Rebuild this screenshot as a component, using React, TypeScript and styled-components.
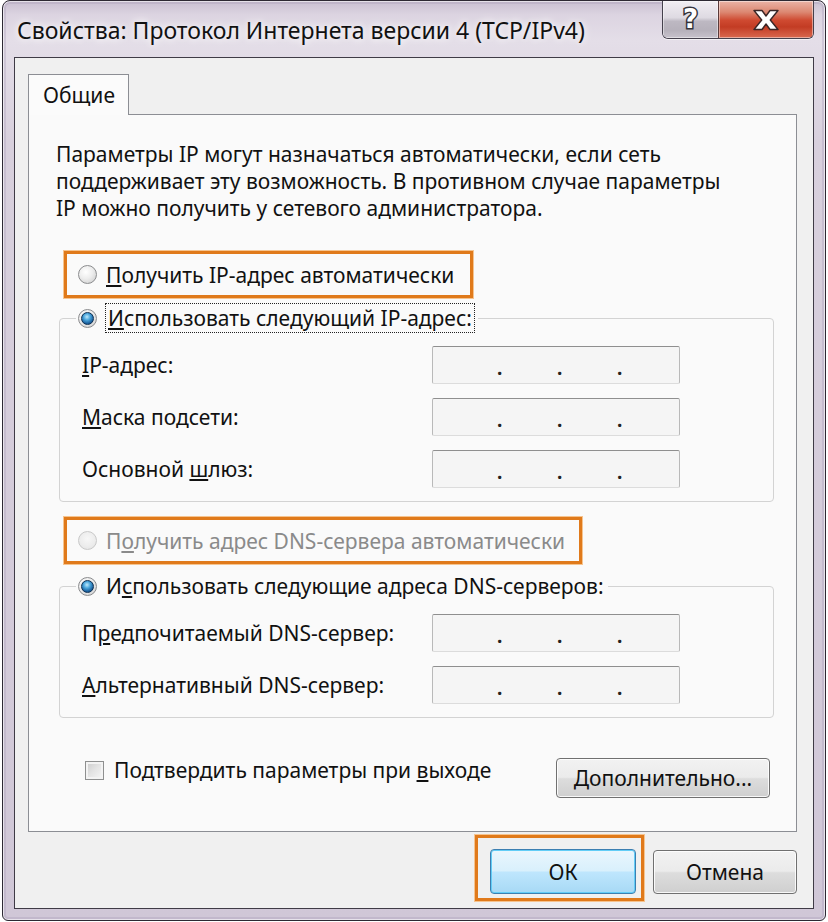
import React from 'react';
import styled, { createGlobalStyle } from 'styled-components';

const GlobalStyle = createGlobalStyle`
  html, body { margin: 0; padding: 0; background: #ffffff; }
  body { font-family: "Noto Sans", "Open Sans", sans-serif; color: #111111; }
  * { box-sizing: border-box; }
`;

const FS = 21;

const Window = styled.div`
  width: 824px;
  height: 921px;
  margin: 0 2px 1px 2px;
  border: 1px solid #2d2933;
  border-radius: 8px 8px 6px 6px;
  background: linear-gradient(180deg, #c9bfd1 0px, #dcd4e1 14px, #e4dee8 40px, #d8d0dd 140px, #d0c7d7 100%);
  box-shadow: inset 0 0 0 1px rgba(255, 255, 255, 0.6), inset 0 0 0 3px rgba(170, 158, 184, 0.35);
  display: flex;
  flex-direction: column;
  padding: 0 11px 11px 11px;
  overflow: hidden;
`;

const TitleBar = styled.div`
  height: 56px;
  display: flex;
  align-items: flex-start;
  justify-content: space-between;
`;

const Title = styled.div`
  margin-top: 15px;
  padding-left: 3px;
  font-size: 23px;
  line-height: 28px;
  color: #111;
  white-space: nowrap;
  text-shadow: 0 0 6px rgba(255, 255, 255, 0.95), 0 0 12px rgba(255, 255, 255, 0.8);
`;

const CaptionGroup = styled.div`
  display: flex;
  border: 1px solid #45414d;
  border-top: none;
  border-radius: 0 0 6px 6px;
  overflow: hidden;
  box-shadow: 0 1px 0 rgba(255, 255, 255, 0.6);
`;

const CaptionButton = styled.div<{ $close?: boolean }>`
  height: 37px;
  width: ${(p) => (p.$close ? '95px' : '55px')};
  display: flex;
  align-items: center;
  justify-content: center;
  border-left: ${(p) => (p.$close ? '1px solid #5a3a3a' : 'none')};
  background: ${(p) =>
    p.$close
      ? 'linear-gradient(180deg, #eab3a6 0%, #dc8872 30%, #cf4a31 52%, #c33c24 70%, #d9694f 100%)'
      : 'linear-gradient(180deg, #f1eef3 0%, #dedae2 45%, #bdb8c2 55%, #b6b1bb 80%, #c7c2cc 100%)'};
  box-shadow: inset 0 0 0 1px rgba(255, 255, 255, 0.45);
`;

const HelpGlyph = styled.span`
  font-family: "DejaVu Sans", sans-serif;
  font-weight: bold;
  font-size: 26px;
  line-height: 1;
  color: #ffffff;
  -webkit-text-stroke: 3px #34333b;
  paint-order: stroke fill;
  margin-top: -2px;
`;

const Client = styled.div`
  flex: 1;
  display: flex;
  flex-direction: column;
  background: #f0f0f0;
  border: 1px solid #3f3b46;
  padding: 16px 16px 14px 13px;
`;

const TabStrip = styled.div`
  display: flex;
  position: relative;
  z-index: 1;
`;

const Tab = styled.div`
  width: 101px;
  height: 41px;
  margin-bottom: -1px;
  border: 1px solid #8c8e94;
  border-bottom: none;
  background: #fbfbfb;
  font-size: ${FS}px;
  line-height: 40px;
  padding-left: 14px;
`;

const Panel = styled.div`
  flex: 1;
  display: flex;
  flex-direction: column;
  border: 1px solid #8c8e94;
  background: #fafafa;
  padding: 26px 0 0 0;
`;

const Intro = styled.p`
  margin: 0 0 0 27px;
  font-size: ${FS}px;
  line-height: 27px;
`;

const Highlight = styled.div<{ $width: number; $top: number }>`
  width: ${(p) => p.$width}px;
  height: 47px;
  margin: ${(p) => p.$top}px 0 0 35px;
  border: 3px solid #e07a1b;
  box-shadow: 0 0 0 1px #f6c48f;
  display: flex;
  align-items: center;
  padding-left: 11px;
`;

const RadioRow = styled.label<{ $disabled?: boolean }>`
  display: flex;
  align-items: center;
  gap: 9px;
  font-size: ${FS}px;
  line-height: 26px;
  white-space: nowrap;
  color: ${(p) => (p.$disabled ? '#8a8a8a' : '#111111')};
`;

const RadioCircle = styled.span<{ $checked?: boolean; $disabled?: boolean }>`
  width: 19px;
  height: 19px;
  flex: none;
  border-radius: 50%;
  border: 1px solid ${(p) => (p.$disabled ? '#c9c9c9' : '#8b8c8e')};
  background: ${(p) =>
    p.$disabled
      ? 'radial-gradient(circle at 50% 40%, #f7f7f7 0%, #ececec 60%, #e0e0e0 100%)'
      : 'radial-gradient(circle at 40% 35%, #ffffff 0%, #ededed 45%, #d2d2d2 85%, #c4c4c4 100%)'};
  display: flex;
  align-items: center;
  justify-content: center;
  &::after {
    content: '';
    display: ${(p) => (p.$checked ? 'block' : 'none')};
    width: 11px;
    height: 11px;
    border-radius: 50%;
    border: 1px solid #0c2f52;
    background: radial-gradient(circle at 45% 35%, #bfe9fb 0%, #4aa6dc 35%, #1a5e9c 70%, #0e3a66 100%);
  }
`;

const FocusText = styled.span`
  outline: 1px dotted #222;
  padding: 1px 2px;
  line-height: 26px;
`;

const Group = styled.fieldset<{ $top: number }>`
  margin: ${(p) => p.$top}px 22px 0 30px;
  border: 1px solid #d3d3d3;
  border-radius: 4px;
  padding: 14px 90px 13px 22px;
  display: flex;
  flex-direction: column;
  gap: 14px;
  min-width: 0;
`;

const Legend = styled.legend`
  margin-left: -6px;
  padding: 0 4px 0 2px;
  height: 28px;
  display: flex;
  align-items: center;
`;

const FieldRow = styled.div`
  display: grid;
  grid-template-columns: 350px 248px;
  align-items: center;
  font-size: ${FS}px;
`;

const IpBox = styled.div`
  height: 38px;
  display: flex;
  align-items: center;
  padding-left: 8px;
  background: #f5f5f5;
  border: 1px solid #b9b9b9;
  border-top-color: #8f8f8f;
  border-bottom-color: #dcdcdc;
  border-radius: 2px;
`;

const IpSeg = styled.span`
  width: 56px;
`;

const IpDot = styled.span`
  width: 4px;
  text-align: center;
  font-size: 19px;
  line-height: 1;
  margin-top: 6px;
  font-weight: bold;
  color: #222;
`;

const BottomRow = styled.div`
  margin: 40px 26px 0 56px;
  display: flex;
  justify-content: space-between;
  align-items: flex-start;
`;

const CheckRow = styled.label`
  display: flex;
  align-items: center;
  gap: 10px;
  font-size: ${FS}px;
  line-height: 22px;
  padding-top: 1px;
  white-space: nowrap;
`;

const CheckBox = styled.span`
  width: 19px;
  height: 19px;
  flex: none;
  border: 1px solid #8e8f8f;
  background: linear-gradient(135deg, #cbcbcb 0%, #e4e4e4 50%, #f7f7f7 100%);
  box-shadow: inset 0 0 0 2px #f3f3f3;
`;

const Button = styled.button<{ $primary?: boolean; $w: number; $h: number }>`
  width: ${(p) => p.$w}px;
  height: ${(p) => p.$h}px;
  font-family: inherit;
  font-size: ${FS}px;
  color: #111;
  padding: 0;
  border-radius: 4px;
  border: 1px solid ${(p) => (p.$primary ? '#3c7fb1' : '#707070')};
  background: ${(p) =>
    p.$primary
      ? 'linear-gradient(180deg, #eaf6fd 0%, #d9f0fc 48%, #bee6fd 52%, #a7d9f5 100%)'
      : 'linear-gradient(180deg, #f2f2f2 0%, #ebebeb 48%, #dddddd 52%, #cfcfcf 100%)'};
  box-shadow: inset 0 0 0 1px ${(p) => (p.$primary ? '#62cdf7' : 'rgba(255,255,255,0.85)')};
`;

const Footer = styled.div`
  height: 62px;
  display: flex;
  justify-content: flex-end;
  align-items: flex-end;
  gap: 17px;
`;

const OkSlot = styled.div`
  position: relative;
  &::before {
    content: '';
    position: absolute;
    top: -14px;
    bottom: -7px;
    left: -15px;
    right: -8px;
    border: 3px solid #e07a1b;
    box-shadow: 0 0 0 1px #f6c48f;
    pointer-events: none;
  }
`;

const Ip = () => (
  <IpBox>
    <IpSeg />
    <IpDot>.</IpDot>
    <IpSeg />
    <IpDot>.</IpDot>
    <IpSeg />
    <IpDot>.</IpDot>
    <IpSeg />
  </IpBox>
);

const CloseGlyph = () => (
  <svg width="28" height="22" viewBox="0 0 28 22">
    <path
      d="M2 1.5 H10 L14 7 L18 1.5 H26 L18.3 11 L26 20.5 H18 L14 15 L10 20.5 H2 L9.7 11 Z"
      fill="#ffffff"
      stroke="#3a2626"
      strokeWidth="1.4"
      strokeLinejoin="round"
    />
  </svg>
);

export default function App() {
  return (
    <>
      <GlobalStyle />
      <Window>
        <TitleBar>
          <Title>Свойства: Протокол Интернета версии 4 (TCP/IPv4)</Title>
          <CaptionGroup>
            <CaptionButton>
              <HelpGlyph>?</HelpGlyph>
            </CaptionButton>
            <CaptionButton $close>
              <CloseGlyph />
            </CaptionButton>
          </CaptionGroup>
        </TitleBar>
        <Client>
          <TabStrip>
            <Tab>Общие</Tab>
          </TabStrip>
          <Panel>
            <Intro>
              Параметры IP могут назначаться автоматически, если сеть
              <br />
              поддерживает эту возможность. В противном случае параметры
              <br />
              IP можно получить у сетевого администратора.
            </Intro>

            <Highlight $width={409} $top={29}>
              <RadioRow>
                <RadioCircle />
                <span>
                  <u>П</u>олучить IP-адрес автоматически
                </span>
              </RadioRow>
            </Highlight>

            <Group $top={6}>
              <Legend>
                <RadioRow>
                  <RadioCircle $checked />
                  <FocusText>
                    <u>И</u>спользовать следующий IP-адрес:
                  </FocusText>
                </RadioRow>
              </Legend>
              <FieldRow>
                <span>
                  <u>I</u>P-адрес:
                </span>
                <Ip />
              </FieldRow>
              <FieldRow>
                <span>
                  <u>М</u>аска подсети:
                </span>
                <Ip />
              </FieldRow>
              <FieldRow>
                <span>
                  Основной <u>ш</u>люз:
                </span>
                <Ip />
              </FieldRow>
            </Group>

            <Highlight $width={518} $top={15}>
              <RadioRow $disabled>
                <RadioCircle $disabled />
                <span>
                  П<u>о</u>лучить адрес DNS-сервера автоматически
                </span>
              </RadioRow>
            </Highlight>

            <Group $top={8}>
              <Legend>
                <RadioRow>
                  <RadioCircle $checked />
                  <span>
                    И<u>с</u>пользовать следующие адреса DNS-серверов:
                  </span>
                </RadioRow>
              </Legend>
              <FieldRow>
                <span>
                  П<u>р</u>едпочитаемый DNS-сервер:
                </span>
                <Ip />
              </FieldRow>
              <FieldRow>
                <span>
                  <u>А</u>льтернативный DNS-сервер:
                </span>
                <Ip />
              </FieldRow>
            </Group>

            <BottomRow>
              <CheckRow>
                <CheckBox />
                <span>
                  Подтвердить параметры при <u>в</u>ыходе
                </span>
              </CheckRow>
              <Button $w={214} $h={40}>
                <u>Д</u>ополнительно...
              </Button>
            </BottomRow>
          </Panel>
          <Footer>
            <OkSlot>
              <Button $primary $w={146} $h={45}>
                ОК
              </Button>
            </OkSlot>
            <Button $w={144} $h={44}>
              Отмена
            </Button>
          </Footer>
        </Client>
      </Window>
    </>
  );
}
